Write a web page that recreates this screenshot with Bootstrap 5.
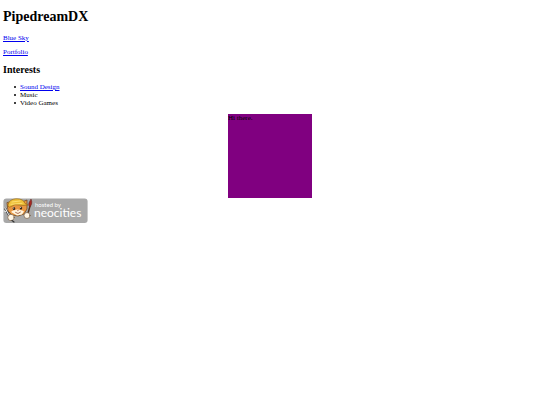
<!DOCTYPE html>
<html lang="en">
<head>
<meta charset="utf-8">
<meta name="viewport" content="width=device-width, initial-scale=1">
<title>PipedreamDX</title>
<link href="https://cdn.jsdelivr.net/npm/bootstrap@5.3.0/dist/css/bootstrap.min.css" rel="stylesheet">
<style>
  body { font-family: "Liberation Serif", "Times New Roman", serif; font-size: 7px; line-height: 8px; color: #000; padding: 9px 3px; }
  h1 { font-size: 14px; line-height: 16px; margin-bottom: 9px; }
  h2 { font-size: 10px; line-height: 12px; margin-bottom: 7px; }
  p { margin-bottom: 6px; }
  a { color: #00e; }
  .interests { padding-left: 11px; margin-bottom: 7px; }
  .interests li::before { content: ""; width: 2px; height: 2px; margin-right: 4px; border-radius: 50%; background: #000; }
  .greeting { width: 84px; height: 84px; background: purple; }
  .host-logo { width: 85px; height: 26px; }
</style>
<script src="https://cdn.jsdelivr.net/npm/bootstrap@5.3.0/dist/js/bootstrap.bundle.min.js" defer></script>
</head>
<body class="bg-white">
  <h1 class="fw-bold">PipedreamDX</h1>
  <p><a href="#blue-sky">Blue Sky</a></p>
  <p class="mb-2"><a href="#portfolio">Portfolio</a></p>
  <h2 class="fw-bold">Interests</h2>
  <ul class="interests">
    <li class="d-flex align-items-center"><a href="#sound-design">Sound Design</a></li>
    <li class="d-flex align-items-center">Music</li>
    <li class="d-flex align-items-center">Video Games</li>
  </ul>
  <div class="greeting mx-auto">Hi there.</div>
  <a class="d-inline-block" href="#neocities" aria-label="Hosted by Neocities">
    <svg class="host-logo d-block" viewBox="0 0 85 26" aria-hidden="true">
      <rect x="0.4" y="0.4" width="84.2" height="24.6" rx="3" fill="#a8a8a8"/>
      <g stroke-linecap="round" stroke-linejoin="round">
        <path d="M2.500 11 7 19" stroke="#444" stroke-width="2.400"/>
        <path d="M2 10 7 19M1 13 3 13.500 4.500 11" fill="none" stroke="#eee" stroke-width="1"/>
        <path d="M4 5 5 13 9 17 15 18 21 16 24 11 24 2 19 4 11 3Z" fill="#e89642" stroke="#6b4218" stroke-width=".7"/>
        <path d="M5 8C5 3 9 .8 14 .8c4 0 7 1.500 8 4.700l3 1.500-5 .4-8-.7-5 2.300Z" fill="#efc13a" stroke="#8a5c12" stroke-width=".6"/>
        <path d="M9 4 17 3M8 6.300 19 5.300" stroke="#ffe480" stroke-width=".8"/>
        <path d="M8 14c2-2 4-1.800 6-2.500 2 .2 5 .2 7 2l-2 3-5 1Z" fill="#fff3dc"/>
        <ellipse cx="11" cy="10.500" rx="1.200" ry="1.600" fill="#332418"/><ellipse cx="18" cy="10" rx="1.200" ry="1.600" fill="#332418"/>
        <circle cx="10.700" cy="10" r=".5" fill="#fff"/><circle cx="17.700" cy="9.500" r=".5" fill="#fff"/>
        <path d="M14 12.300h1.800l-.9 1Z" fill="#943"/>
        <path d="M12.500 14.500q2.500 2.500 5-.3" fill="none" stroke="#8b3c20" stroke-width=".7"/>
        <path d="M24.500 17 27 8" stroke="#53331d" stroke-width="1.500"/>
        <path d="M26 8C25 5 27 3.500 28 1c1.500 3 .8 5.500-.7 7.500Z" fill="#a72620" stroke="#5c211d" stroke-width=".5"/>
        <circle cx="8" cy="19.500" r="3.200" fill="#fff6e6" stroke="#68492d" stroke-width=".6"/>
        <circle cx="24" cy="17.500" r="3" fill="#fff6e6" stroke="#68492d" stroke-width=".6"/>
        <path d="M9 22.500 11 24" stroke="#333" stroke-width="1.200"/>
      </g>
      <g fill="#fff" font-family="Lato, sans-serif">
        <text x="32" y="9" font-size="6">hosted by</text>
        <text x="31" y="19" font-size="12">neocities</text>
      </g>
    </svg>
  </a>
</body>
</html>
